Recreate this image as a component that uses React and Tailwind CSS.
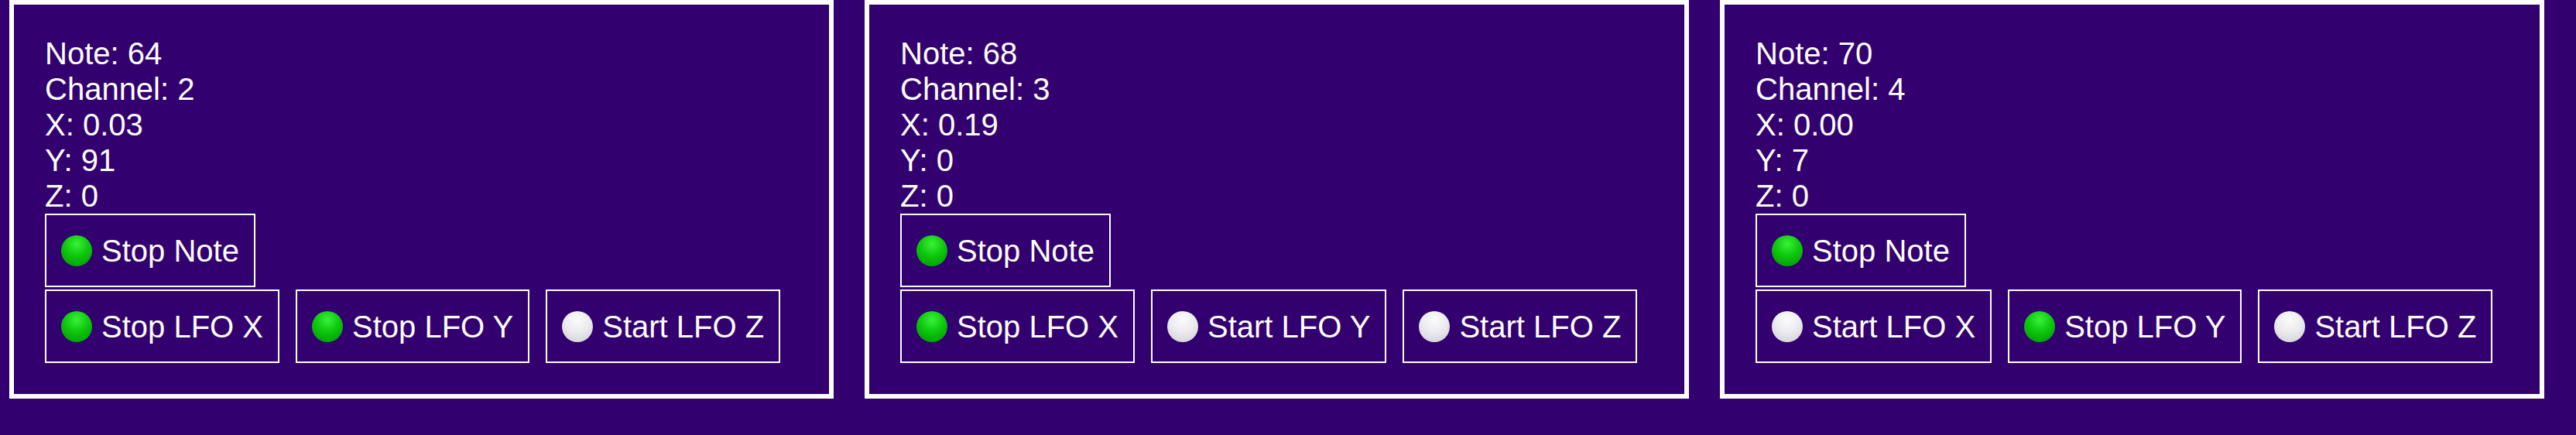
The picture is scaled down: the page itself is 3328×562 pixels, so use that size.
import React from 'react'

const voices = [
  {
    note: 64, channel: 2, x: '0.03', y: 91, z: 0,
    note_on: true, lfo: { X: true, Y: true, Z: false },
  },
  {
    note: 68, channel: 3, x: '0.19', y: 0, z: 0,
    note_on: true, lfo: { X: true, Y: false, Z: false },
  },
  {
    note: 70, channel: 4, x: '0.00', y: 7, z: 0,
    note_on: true, lfo: { X: false, Y: true, Z: false },
  },
]

function Led({ on }) {
  return on ? (
    <span className="h-[40px] w-[40px] shrink-0 rounded-full bg-[radial-gradient(circle_at_50%_28%,#3cf03c_0%,#10cc10_40%,#03a503_80%,#028a02_100%)]" />
  ) : (
    <span className="h-[40px] w-[40px] shrink-0 rounded-full bg-[radial-gradient(circle_at_50%_28%,#fbfbfd_0%,#ececf0_45%,#d8d8dc_80%,#c4c4c8_100%)]" />
  )
}

function ToggleButton({ on, label }) {
  return (
    <button className="flex h-[95px] items-center gap-[12px] border-2 border-white bg-transparent pl-[19px] pr-[19px] text-[40px] leading-[46px] text-white">
      <Led on={on} />
      <span>{label}</span>
    </button>
  )
}

function VoicePanel({ v }) {
  return (
    <div className="w-[1065px] shrink-0 border-[6px] border-white p-[40px]">
      <div className="text-[40px] leading-[46px] text-white">
        <div>Note: {v.note}</div>
        <div>Channel: {v.channel}</div>
        <div>X: {v.x}</div>
        <div>Y: {v.y}</div>
        <div>Z: {v.z}</div>
      </div>
      <div className="flex flex-col gap-[3px]">
        <div className="flex">
          <ToggleButton on={v.note_on} label={v.note_on ? 'Stop Note' : 'Start Note'} />
        </div>
        <div className="flex gap-[21px]">
          {['X', 'Y', 'Z'].map((axis) => (
            <ToggleButton
              key={axis}
              on={v.lfo[axis]}
              label={`${v.lfo[axis] ? 'Stop' : 'Start'} LFO ${axis}`}
            />
          ))}
        </div>
      </div>
    </div>
  )
}

export default function App() {
  return (
    <div className="flex h-[562px] w-[3328px] items-start gap-[40px] bg-[#33006f] pl-[12px] font-['Liberation_Sans',Arial,sans-serif]">
      {voices.map((v) => (
        <VoicePanel key={v.note} v={v} />
      ))}
    </div>
  )
}
